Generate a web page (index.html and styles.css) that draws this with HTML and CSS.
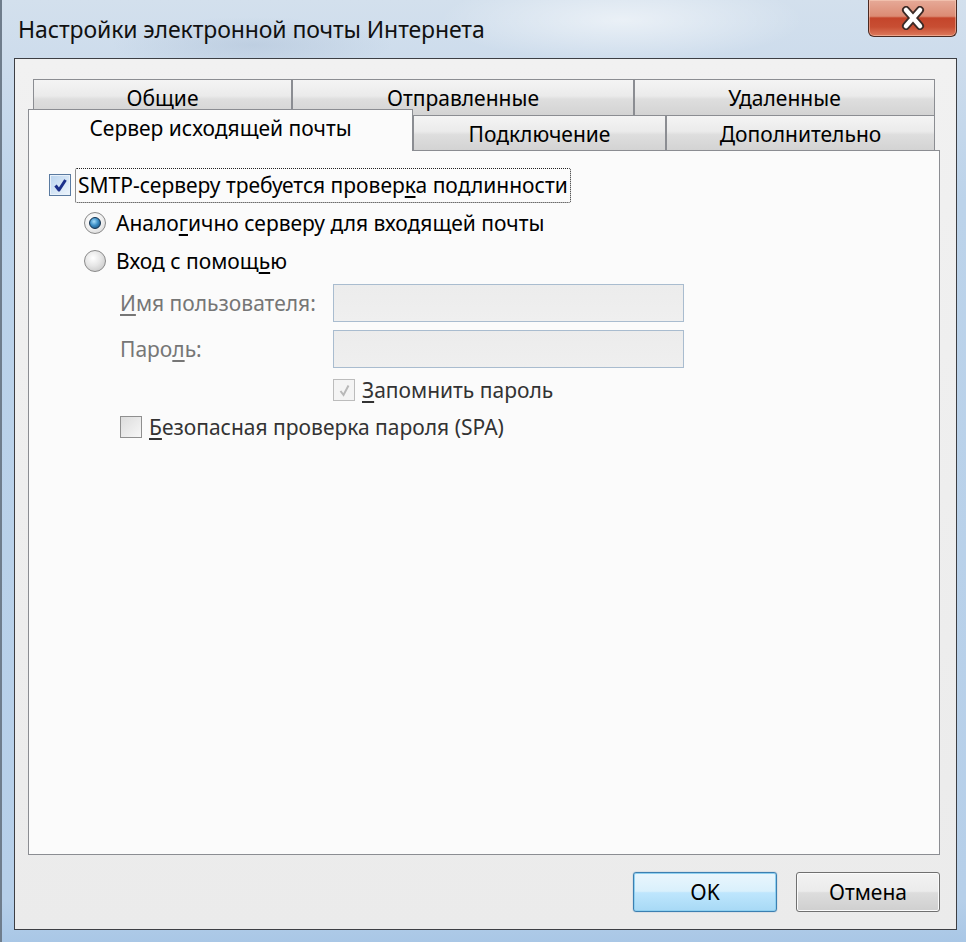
FILE: index.html
```html
<!DOCTYPE html>
<html lang="ru">
<head>
<meta charset="utf-8">
<title>Настройки электронной почты Интернета</title>
<link rel="stylesheet" href="styles.css">
</head>
<body>
<div class="window">
  <div class="titlebar">
    <div class="title">Настройки электронной почты Интернета</div>
    <div class="close">
      <svg width="30" height="24" viewBox="0 0 30 24">
        <path d="M8 4 L22 20 M22 4 L8 20" stroke="#3b2a26" stroke-width="8" stroke-linecap="round" fill="none"/>
        <path d="M8 4 L22 20 M22 4 L8 20" stroke="#ffffff" stroke-width="4.5" stroke-linecap="round" fill="none"/>
      </svg>
    </div>
  </div>
  <div class="client">
    <div class="tabs">
      <div class="tabrow back">
        <div class="tab w1">Общие</div>
        <div class="tab w2">Отправленные</div>
        <div class="tab w3">Удаленные</div>
      </div>
      <div class="tabrow front">
        <div class="tab selected">Сервер исходящей почты</div>
        <div class="tab w4">Подключение</div>
        <div class="tab w5">Дополнительно</div>
      </div>
    </div>
    <div class="panel">
      <div class="row row-auth">
        <span class="cb checked">
          <svg width="15" height="15" viewBox="0 0 15 15"><path d="M2.5 7.5 L6 12 L12.5 2" stroke="#1b2f8a" stroke-width="3" fill="none" stroke-linejoin="round"/></svg>
        </span>
        <span class="focus">SMTP-серверу требуется провер<u>к</u>а подлинности</span>
      </div>
      <div class="row row-radio">
        <span class="radio on"><span class="dot"></span></span>
        <span class="lbl">Анало<u>г</u>ично серверу для входящей почты</span>
      </div>
      <div class="row row-radio">
        <span class="radio"></span>
        <span class="lbl">Вход с помощ<u>ь</u>ю</span>
      </div>
      <div class="fields">
        <div class="field">
          <span class="flabel"><u>И</u>мя пользователя:</span>
          <span class="input"></span>
        </div>
        <div class="field">
          <span class="flabel">Паро<u>л</u>ь:</span>
          <span class="input"></span>
        </div>
      </div>
      <div class="row row-remember">
        <span class="cb disabled">
          <svg width="15" height="15" viewBox="0 0 15 15"><path d="M3.5 8 L6.5 12 L11.5 2.5" stroke="#b8b8b8" stroke-width="2" fill="none"/></svg>
        </span>
        <span class="lbl dim"><u>З</u>апомнить пароль</span>
      </div>
      <div class="row row-spa">
        <span class="cb"></span>
        <span class="lbl dim"><u>Б</u>езопасная проверка пароля (SPA)</span>
      </div>
    </div>
    <div class="buttons">
      <div class="btn default">OK</div>
      <div class="btn">Отмена</div>
    </div>
  </div>
</div>
</body>
</html>
```

FILE: styles.css
```css
html, body {
  margin: 0;
  padding: 0;
}
body {
  width: 966px;
  height: 942px;
  overflow: hidden;
  font-family: "Noto Sans", "Open Sans", sans-serif;
  color: #000;
}
.window {
  width: 966px;
  height: 942px;
  box-sizing: border-box;
  border-left: 2px solid #6f7d8c;
  display: flex;
  flex-direction: column;
  background:
    radial-gradient(ellipse 260px 60px at 620px 20px, rgba(255,255,255,0.55), rgba(255,255,255,0) 70%),
    radial-gradient(ellipse 200px 40px at 250px 45px, rgba(160,180,205,0.35), rgba(160,180,205,0) 70%),
    linear-gradient(to bottom, #d3e0ed 0px, #cddcec 60px, #bcd3ea 200px, #b6cfe9 900px, #a9c7e6 942px);
}
.titlebar {
  height: 58px;
  display: flex;
  align-items: flex-start;
  flex-shrink: 0;
}
.title {
  margin-left: 16px;
  margin-top: 13px;
  font-size: 23px;
  color: #111;
  letter-spacing: -0.1px;
}
.close {
  margin-left: auto;
  margin-right: 9px;
  width: 89px;
  height: 37px;
  box-sizing: border-box;
  border: 1px solid #4b2a22;
  border-top: none;
  border-radius: 0 0 6px 6px;
  background: linear-gradient(to bottom, #e6aa98 0%, #dc8b74 45%, #c4452b 50%, #c84e33 75%, #dd7a5c 100%);
  box-shadow: inset 0 0 0 1px rgba(255,220,200,0.45);
  display: flex;
  align-items: center;
  justify-content: center;
}
.client {
  flex: 1;
  margin: 0 9px 12px 12px;
  border: 1px solid #3d3f44;
  background: linear-gradient(to bottom, #f1f1f1, #ebebeb);
  display: flex;
  flex-direction: column;
  padding: 20px 16px 0 13px;
}
.tabs {
  display: flex;
  flex-direction: column;
}
.tabrow {
  display: flex;
}
.tabrow.back {
  margin-left: 5px;
  height: 36px;
}
.tabrow.front {
  height: 35px;
  align-items: flex-end;
}
.tab {
  box-sizing: border-box;
  border: 1px solid #8b8d92;
  border-bottom: none;
  background: linear-gradient(to bottom, #f4f4f4 0%, #ebebeb 45%, #dedede 55%, #d3d3d3 100%);
  font-size: 21px;
  display: flex;
  align-items: center;
  justify-content: center;
  padding-top: 1px;
}
.tabrow.back .tab { height: 36px; }
.w1 { width: 259px; }
.w2 { width: 342px; }
.w3 { width: 301px; }
.w4 { width: 253px; height: 35px; }
.w5 { width: 269px; height: 35px; }
.tab.selected {
  width: 385px;
  height: 42px;
  margin-bottom: -1px;
  background: #fbfbfb;
  position: relative;
  z-index: 1;
  padding-top: 0;
  padding-bottom: 6px;
}
.panel {
  flex: 1;
  border: 1px solid #8b8d92;
  background: #fbfbfb;
  display: flex;
  flex-direction: column;
  padding-top: 15px;
  font-size: 21px;
}
.row {
  display: flex;
  align-items: center;
  height: 38px;
  flex-shrink: 0;
}
.row-auth { padding-left: 20px; }
.row-radio { padding-left: 55px; }
.row-remember { padding-left: 304px; height: 38px; margin-top: 3px; }
.row-spa { padding-left: 91px; height: 36px; }
.cb {
  width: 22px;
  height: 22px;
  box-sizing: border-box;
  border: 1px solid #8f8f8f;
  background: linear-gradient(135deg, #dcdcdc, #f7f7f7);
  display: flex;
  align-items: center;
  justify-content: center;
  flex-shrink: 0;
}
.cb.checked {
  border-color: #5a7aa0;
  background: linear-gradient(135deg, #b9d3ee, #eef5fc);
  box-shadow: inset 0 0 0 1px #e8f1fa;
}
.cb.disabled {
  border-color: #bcbcbc;
  background: #f4f4f4;
}
.focus {
  margin-left: 4px;
  padding: 2px 2px 3px 2px;
  border: 1px dotted #222;
  border-radius: 2px;
  white-space: nowrap;
}
.radio {
  width: 22px;
  height: 22px;
  box-sizing: border-box;
  border-radius: 50%;
  border: 1px solid #8a8a8a;
  background: radial-gradient(circle at 40% 35%, #ffffff 0%, #e6e6e6 45%, #bdbdbd 100%);
  display: flex;
  align-items: center;
  justify-content: center;
  flex-shrink: 0;
}
.radio.on {
  background: radial-gradient(circle at 40% 35%, #ffffff 0%, #f0f0f0 50%, #cfcfcf 100%);
}
.dot {
  width: 12px;
  height: 12px;
  box-sizing: border-box;
  border-radius: 50%;
  border: 1px solid #12314f;
  background: radial-gradient(circle at 40% 35%, #a5dcfa 0%, #3d8fc6 45%, #123f6a 100%);
}
.lbl {
  margin-left: 10px;
  white-space: nowrap;
}
.lbl.dim { color: #333; margin-left: 7px; }
.fields {
  display: flex;
  flex-direction: column;
  gap: 8px;
  margin-top: 4px;
  padding-left: 91px;
}
.field {
  display: flex;
  align-items: center;
  height: 38px;
}
.flabel {
  width: 213px;
  color: #767676;
  white-space: nowrap;
}
.input {
  width: 351px;
  height: 38px;
  box-sizing: border-box;
  border: 1px solid #a9bccf;
  background: linear-gradient(to bottom, #ececec, #efefef);
}
u {
  text-decoration: underline;
  text-underline-offset: 3px;
}
.buttons {
  height: 74px;
  display: flex;
  align-items: center;
  justify-content: flex-end;
  gap: 19px;
  flex-shrink: 0;
}
.btn {
  width: 144px;
  height: 40px;
  box-sizing: border-box;
  border: 1px solid #707070;
  border-radius: 3px;
  background: linear-gradient(to bottom, #f3f3f3 0%, #ebebeb 48%, #dddddd 52%, #cfcfcf 100%);
  box-shadow: inset 0 0 0 1px #fbfbfb;
  font-size: 21px;
  display: flex;
  align-items: center;
  justify-content: center;
}
.btn.default {
  border-color: #3c7fb1;
  background: linear-gradient(to bottom, #eaf6fd 0%, #d9f0fc 48%, #bee6fd 52%, #a7d9f5 100%);
  box-shadow: inset 0 0 0 1px #8fd0f0, 0 0 1px #3c7fb1;
}
```
